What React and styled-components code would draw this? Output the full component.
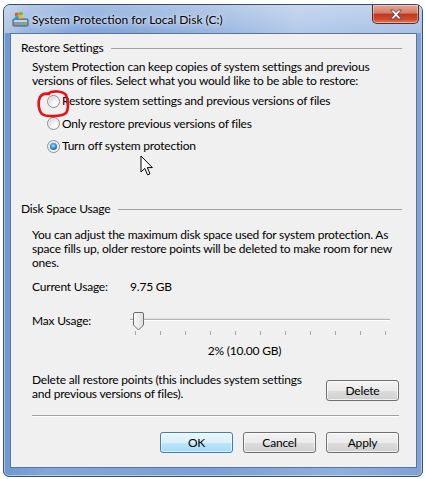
import styled, { createGlobalStyle } from "styled-components";

const GlobalStyle = createGlobalStyle`
  html, body {
    margin: 0;
    padding: 0;
    background: #ffffff;
  }
  body {
    font: 12px "Lato", "Liberation Sans", sans-serif;
    letter-spacing: -0.2px;
    color: #000000;
  }
`;

const Window = styled.div`
  position: relative;
  box-sizing: border-box;
  margin: 4px 0 0 3px;
  width: 420px;
  height: 473px;
  border: 1px solid #3d4f66;
  border-radius: 7px 7px 6px 6px;
  padding: 0 5px 8px 6px;
  display: flex;
  flex-direction: column;
  background: linear-gradient(
    to right,
    #6e98d1 0%,
    #82a6d8 10%,
    #7aa0d5 50%,
    #8fb0dd 80%,
    #7ea2d6 100%
  );
  box-shadow: inset 0 0 0 1px rgba(255, 255, 255, 0.45);
`;

const TitleBar = styled.div`
  height: 28px;
  margin: 0 -5px 0 -6px;
  padding: 0 3px 0 8px;
  display: flex;
  align-items: center;
  border-radius: 6px 6px 0 0;
  background: linear-gradient(
      to bottom,
      rgba(255, 255, 255, 0.35) 0%,
      rgba(255, 255, 255, 0.1) 100%
    ),
    linear-gradient(
      to right,
      #a8c1e4 0%,
      #8cadde 6%,
      #6f98d3 20%,
      #86a8da 45%,
      #a9c3e6 70%,
      #9dbae3 100%
    );
`;

const TitleText = styled.span`
  margin-left: 3px;
  font: 12px "Lato", "Liberation Sans", sans-serif;
  letter-spacing: 0;
  color: #000000;
  text-shadow: 0 0 8px rgba(255, 255, 255, 0.9), 0 0 3px rgba(255, 255, 255, 0.8);
`;

const CloseButton = styled.div`
  align-self: flex-start;
  margin-left: auto;
  width: 47px;
  height: 19px;
  box-sizing: border-box;
  border: 1px solid #5a2d2d;
  border-top: none;
  border-radius: 0 0 5px 5px;
  display: flex;
  align-items: center;
  justify-content: center;
  background: linear-gradient(
    to bottom,
    #e8a594 0%,
    #d67d69 45%,
    #c2361f 50%,
    #cc4a2f 80%,
    #e0836a 100%
  );
  box-shadow: inset 0 0 0 1px rgba(255, 255, 255, 0.35);
`;

const Client = styled.div`
  flex: 1;
  box-sizing: border-box;
  border: 1px solid #5a7597;
  background: #f0f0f0;
  padding: 7px 0 0 10px;
  display: flex;
  flex-direction: column;
  line-height: 14px;
`;

const GroupHeader = styled.div`
  display: flex;
  align-items: center;
  gap: 8px;
  height: 14px;
  margin-right: 14px;
  margin-top: ${(p) => p.$top || 0}px;
`;

const GroupLine = styled.div`
  flex: 1;
  border-top: 1px solid #a0a0a0;
`;

const Text = styled.div`
  margin-left: 11px;
  margin-top: ${(p) => p.$top || 0}px;
  white-space: nowrap;
`;

const RadioList = styled.div`
  display: flex;
  flex-direction: column;
  margin: 2px 0 0 26px;
`;

const RadioRow = styled.div`
  height: ${(p) => p.$h || 22}px;
  display: flex;
  align-items: center;
  gap: 2px;
`;

const Radio = styled.span`
  width: 13px;
  height: 13px;
  box-sizing: border-box;
  border-radius: 50%;
  border: 1px solid #8f8f8f;
  background: radial-gradient(
    circle at 65% 70%,
    #ffffff 0%,
    #f2f2f2 35%,
    #d8d8d8 70%,
    #cfcfcf 100%
  );
  box-shadow: inset 0 0 0 1px #f4f4f4;
  display: flex;
  align-items: center;
  justify-content: center;
  &::after {
    content: "";
    display: ${(p) => (p.$checked ? "block" : "none")};
    width: 7px;
    height: 7px;
    border-radius: 50%;
    background: radial-gradient(
      circle at 45% 40%,
      #b9ecff 0%,
      #3aa3e6 35%,
      #1d67ad 70%,
      #12406f 100%
    );
  }
`;

const InfoRow = styled.div`
  display: flex;
  align-items: center;
  margin-left: 11px;
  margin-top: ${(p) => p.$top || 0}px;
  height: ${(p) => p.$h || 14}px;
`;

const Label = styled.span`
  width: 98px;
`;

const Slider = styled.div`
  position: relative;
  width: 260px;
  height: 30px;
  display: flex;
  flex-direction: column;
`;

const Track = styled.div`
  margin-top: 13px;
  height: 1px;
  background: #b4b4b4;
  border-bottom: 1px solid #ffffff;
  box-shadow: 0 -1px 0 #e2e2e2;
`;

const Ticks = styled.div`
  margin: 10px 4px 0 5px;
  height: 4px;
  display: flex;
  justify-content: space-between;
`;

const Tick = styled.span`
  width: 1px;
  background: #a8a8a8;
`;

const Thumb = styled.svg`
  position: absolute;
  left: 3px;
  top: 6px;
`;

const Percent = styled.div`
  margin: 8px 0 0 119px;
  width: 209px;
  text-align: center;
`;

const DeleteRow = styled.div`
  display: flex;
  align-items: flex-start;
  margin: 15px 17px 0 11px;
  justify-content: space-between;
`;

const Separator = styled.div`
  margin: 14px 17px 0 11px;
  border-top: 1px solid #a0a0a0;
  border-bottom: 1px solid #ffffff;
`;

const ButtonRow = styled.div`
  display: flex;
  justify-content: flex-end;
  gap: 10px;
  margin: 15px 17px 0 0;
`;

const Button = styled.div`
  box-sizing: border-box;
  width: 73px;
  height: 21px;
  margin-top: ${(p) => p.$top || 0}px;
  border: 1px solid ${(p) => (p.$default ? "#3c7fb1" : "#707070")};
  border-radius: 3px;
  display: flex;
  align-items: center;
  justify-content: center;
  background: ${(p) =>
    p.$default
      ? "linear-gradient(to bottom, #ebf7fd 0%, #daf0fc 50%, #bee6fd 51%, #a7d9f5 100%)"
      : "linear-gradient(to bottom, #f2f2f2 0%, #ebebeb 50%, #dddddd 51%, #cfcfcf 100%)"};
  box-shadow: inset 0 0 0 1px
    ${(p) => (p.$default ? "rgba(255,255,255,0.6)" : "rgba(255,255,255,0.7)")};
`;

const Overlay = styled.svg`
  position: absolute;
  left: ${(p) => p.$x}px;
  top: ${(p) => p.$y}px;
  pointer-events: none;
`;

function TitleIcon() {
  return (
    <svg width="17" height="16" viewBox="0 0 17 16">
      <rect x="1" y="8" width="15" height="7" rx="1" fill="#8a9aa8" stroke="#4a5866" />
      <rect x="2" y="9" width="13" height="2" fill="#c7d2dc" />
      <rect x="11" y="12" width="3" height="1.5" fill="#3fd34a" />
      <path d="M3 2 L6.5 1.5 L6.5 4.5 L3 5 Z" fill="#f25022" />
      <path d="M7 1.4 L10.5 0.8 L10.5 4 L7 4.4 Z" fill="#7fba00" />
      <path d="M3 5.4 L6.5 4.9 L6.5 7.8 L3 8.2 Z" fill="#00a4ef" />
      <path d="M7 4.8 L10.5 4.4 L10.5 7.3 L7 7.7 Z" fill="#ffb900" />
    </svg>
  );
}

function CloseGlyph() {
  return (
    <svg width="14" height="11" viewBox="0 0 14 11">
      <path
        d="M1.5 1 L4.5 1 L7 3.6 L9.5 1 L12.5 1 L8.7 5.5 L12.5 10 L9.5 10 L7 7.4 L4.5 10 L1.5 10 L5.3 5.5 Z"
        fill="#ffffff"
        stroke="#5b3a3a"
        strokeWidth="0.9"
        strokeLinejoin="round"
      />
    </svg>
  );
}

const ticks = Array.from({ length: 11 }, (_, i) => i);

export default function App() {
  return (
    <>
      <GlobalStyle />
      <Window>
        <TitleBar>
          <TitleIcon />
          <TitleText>System Protection for Local Disk (C:)</TitleText>
          <CloseButton>
            <CloseGlyph />
          </CloseButton>
        </TitleBar>

        <Client>
          <GroupHeader>
            <span>Restore Settings</span>
            <GroupLine />
          </GroupHeader>
          <Text $top={5}>
            System Protection can keep copies of system settings and previous
            <br />
            versions of files. Select what you would like to be able to restore:
          </Text>
          <RadioList>
            <RadioRow>
              <Radio />
              <span>Restore system settings and previous versions of files</span>
            </RadioRow>
            <RadioRow $h={23}>
              <Radio />
              <span>Only restore previous versions of files</span>
            </RadioRow>
            <RadioRow>
              <Radio $checked />
              <span>Turn off system protection</span>
            </RadioRow>
          </RadioList>

          <GroupHeader $top={45}>
            <span>Disk Space Usage</span>
            <GroupLine />
          </GroupHeader>
          <Text $top={12}>
            You can adjust the maximum disk space used for system protection. As
            <br />
            space fills up, older restore points will be deleted to make room for new
            <br />
            ones.
          </Text>
          <InfoRow $top={10}>
            <Label>Current Usage:</Label>
            <span>9.75 GB</span>
          </InfoRow>
          <InfoRow $top={12} $h={30}>
            <Label>Max Usage:</Label>
            <Slider>
              <Track />
              <Ticks>
                {ticks.map((t) => (
                  <Tick key={t} />
                ))}
              </Ticks>
              <Thumb width="11" height="19" viewBox="0 0 11 19">
                <defs>
                  <linearGradient id="thumbFill" x1="0" y1="0" x2="1" y2="0">
                    <stop offset="0" stopColor="#fdfdfd" />
                    <stop offset="1" stopColor="#dcdcdc" />
                  </linearGradient>
                </defs>
                <path
                  d="M2 0.5 L9 0.5 Q10.5 0.5 10.5 2 L10.5 13 L5.5 18 L0.5 13 L0.5 2 Q0.5 0.5 2 0.5 Z"
                  fill="url(#thumbFill)"
                  stroke="#6d6d6d"
                />
              </Thumb>
            </Slider>
          </InfoRow>
          <Percent>2% (10.00 GB)</Percent>

          <DeleteRow>
            <div>
              Delete all restore points (this includes system settings
              <br />
              and previous versions of files).
            </div>
            <Button $top={7}>Delete</Button>
          </DeleteRow>
          <Separator />
          <ButtonRow>
            <Button $default>OK</Button>
            <Button>Cancel</Button>
            <Button>Apply</Button>
          </ButtonRow>
        </Client>

        <Overlay $x={31} $y={83} width="40" height="34" viewBox="0 0 40 34">
          <path
            d="M12 6 C18 2, 28 3, 31 7 C33 12, 34 21, 31 25 C26 29, 11 29, 7 26 C3 22, 3 13, 5 9 C7 6, 10 5, 14 6"
            fill="none"
            stroke="#e3131b"
            strokeWidth="2.7"
            strokeLinecap="round"
          />
        </Overlay>
        <Overlay $x={136} $y={150} width="14" height="22" viewBox="0 0 14 22">
          <path
            d="M1 1 L1 17 L4.8 13.4 L7.6 19.8 L10 18.8 L7.3 12.6 L12.4 12.6 Z"
            fill="#ffffff"
            stroke="#000000"
            strokeWidth="1"
            strokeLinejoin="round"
          />
        </Overlay>
      </Window>
    </>
  );
}
